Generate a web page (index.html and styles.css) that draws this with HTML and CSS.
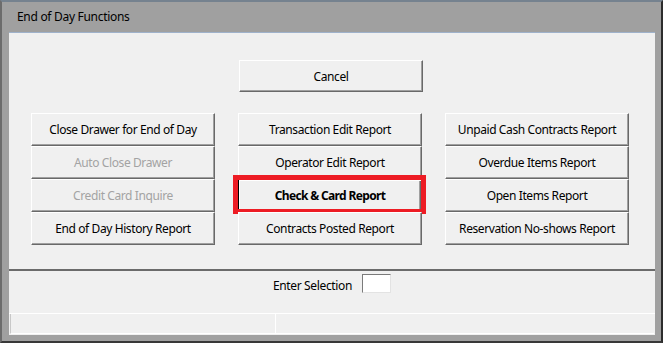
FILE: index.html
```html
<!DOCTYPE html>
<html lang="en">
<head>
  <meta charset="UTF-8" />
  <meta name="viewport" content="width=device-width, initial-scale=1" />
  <title>End of Day Functions</title>
  <link rel="stylesheet" href="styles.css">
</head>
<body>

  <div class="window">
    <div class="titlebar">End of Day Functions</div>

    <div class="client">
      <div class="menu-area">
        <div class="cancel-row">
          <button class="btn">Cancel</button>
        </div>

        <!-- buttons are listed row by row -->
        <div class="menu-grid">
          <button class="btn">Close Drawer for End of Day</button>
          <button class="btn">Transaction Edit Report</button>
          <button class="btn">Unpaid Cash Contracts Report</button>

          <button class="btn" disabled>Auto Close Drawer</button>
          <button class="btn">Operator Edit Report</button>
          <button class="btn">Overdue Items Report</button>

          <button class="btn" disabled>Credit Card Inquire</button>
          <button class="btn btn-default">Check &amp; Card Report<span class="highlight"></span></button>
          <button class="btn">Open Items Report</button>

          <button class="btn">End of Day History Report</button>
          <button class="btn">Contracts Posted Report</button>
          <button class="btn">Reservation No-shows Report</button>
        </div>
      </div>

      <div class="selection-row">
        <label class="selection-label" for="selection">Enter Selection</label>
        <input class="selection-input" id="selection" type="text">
      </div>

      <div class="statusbar">
        <div class="panel panel-left"></div>
        <div class="panel panel-right"></div>
      </div>
    </div>
  </div>

</body>
</html>
```

FILE: styles.css
```css
* {
  box-sizing: border-box;
}

body {
  margin: 0;
  background: #a0a0a0;
  font-family: "Noto Sans", "Open Sans", sans-serif;
  font-size: 12px;
  letter-spacing: -0.35px;
  color: #000;
}

.window {
  width: 663px;
  height: 343px;
  background: #a0a0a0;
  border-top: 2px solid #75828f;
  border-right: 2px solid #2c2c2c;
  border-bottom: 2px solid #383838;
  border-left: 2px solid #6c6c6c;
}

.titlebar {
  height: 30px;
  line-height: 30px;
  padding-left: 15px;
  font-size: 12px;
  letter-spacing: -0.3px;
}

.client {
  margin-left: 7px;
  width: 646px;
  height: 303px;
  background: #f0f0f0;
  border-top: 1px solid #9fb2cb;
  display: flex;
  flex-direction: column;
}

.menu-area {
  padding: 27px 0 24px 22px;
  border-bottom: 2px solid #6b6b6b;
}

.cancel-row {
  padding-left: 208px;
  margin-bottom: 21px;
}

.cancel-row .btn {
  height: 32px;
}

.menu-grid {
  display: grid;
  grid-template-columns: repeat(3, 184px);
  grid-auto-rows: 33px;
  column-gap: 23px;
}

.btn {
  position: relative;
  width: 184px;
  height: 33px;
  margin: 0;
  padding: 0;
  background: #f0f0f0;
  font-family: inherit;
  font-size: 12px;
  letter-spacing: -0.4px;
  color: #000;
  border: 1px solid;
  border-color: #ffffff #696969 #696969 #ffffff;
  box-shadow: inset -1px -1px 0 #a0a0a0;
  border-radius: 0;
}

.btn:disabled {
  color: #a3a3a3;
}

.btn-default {
  font-weight: bold;
  letter-spacing: -0.65px;
  border-color: #000;
  box-shadow: inset 1px 1px 0 #ffffff, inset -1px -1px 0 #696969, inset -2px -2px 0 #a0a0a0;
}

/* red annotation box drawn over the focused button */
.highlight {
  position: absolute;
  left: -6px;
  top: -5px;
  width: 193px;
  height: 39px;
  border: 5px solid #ed1c24;
  pointer-events: none;
}

.selection-row {
  height: 42px;
  display: flex;
  justify-content: center;
  align-items: flex-start;
  padding: 3px 0 0 0;
}

.selection-label {
  line-height: 19px;
  margin-top: 2px;
  margin-right: 10px;
}

.selection-input {
  width: 29px;
  height: 19px;
  margin: 0;
  padding: 0;
  background: #fff;
  border: 1px solid;
  border-color: #7a7a7a #e3e3e3 #e3e3e3 #7a7a7a;
  outline: none;
}

.statusbar {
  height: 22px;
  display: flex;
  border-top: 1px solid #fff;
  padding: 0 1px 1px 1px;
}

.panel {
  height: 20px;
  border-bottom: 1px solid #fff;
}

.panel-left {
  width: 266px;
  border-left: 1px solid #c8c8c8;
  border-right: 1px solid #fff;
}

.panel-right {
  flex: 1;
}
```
